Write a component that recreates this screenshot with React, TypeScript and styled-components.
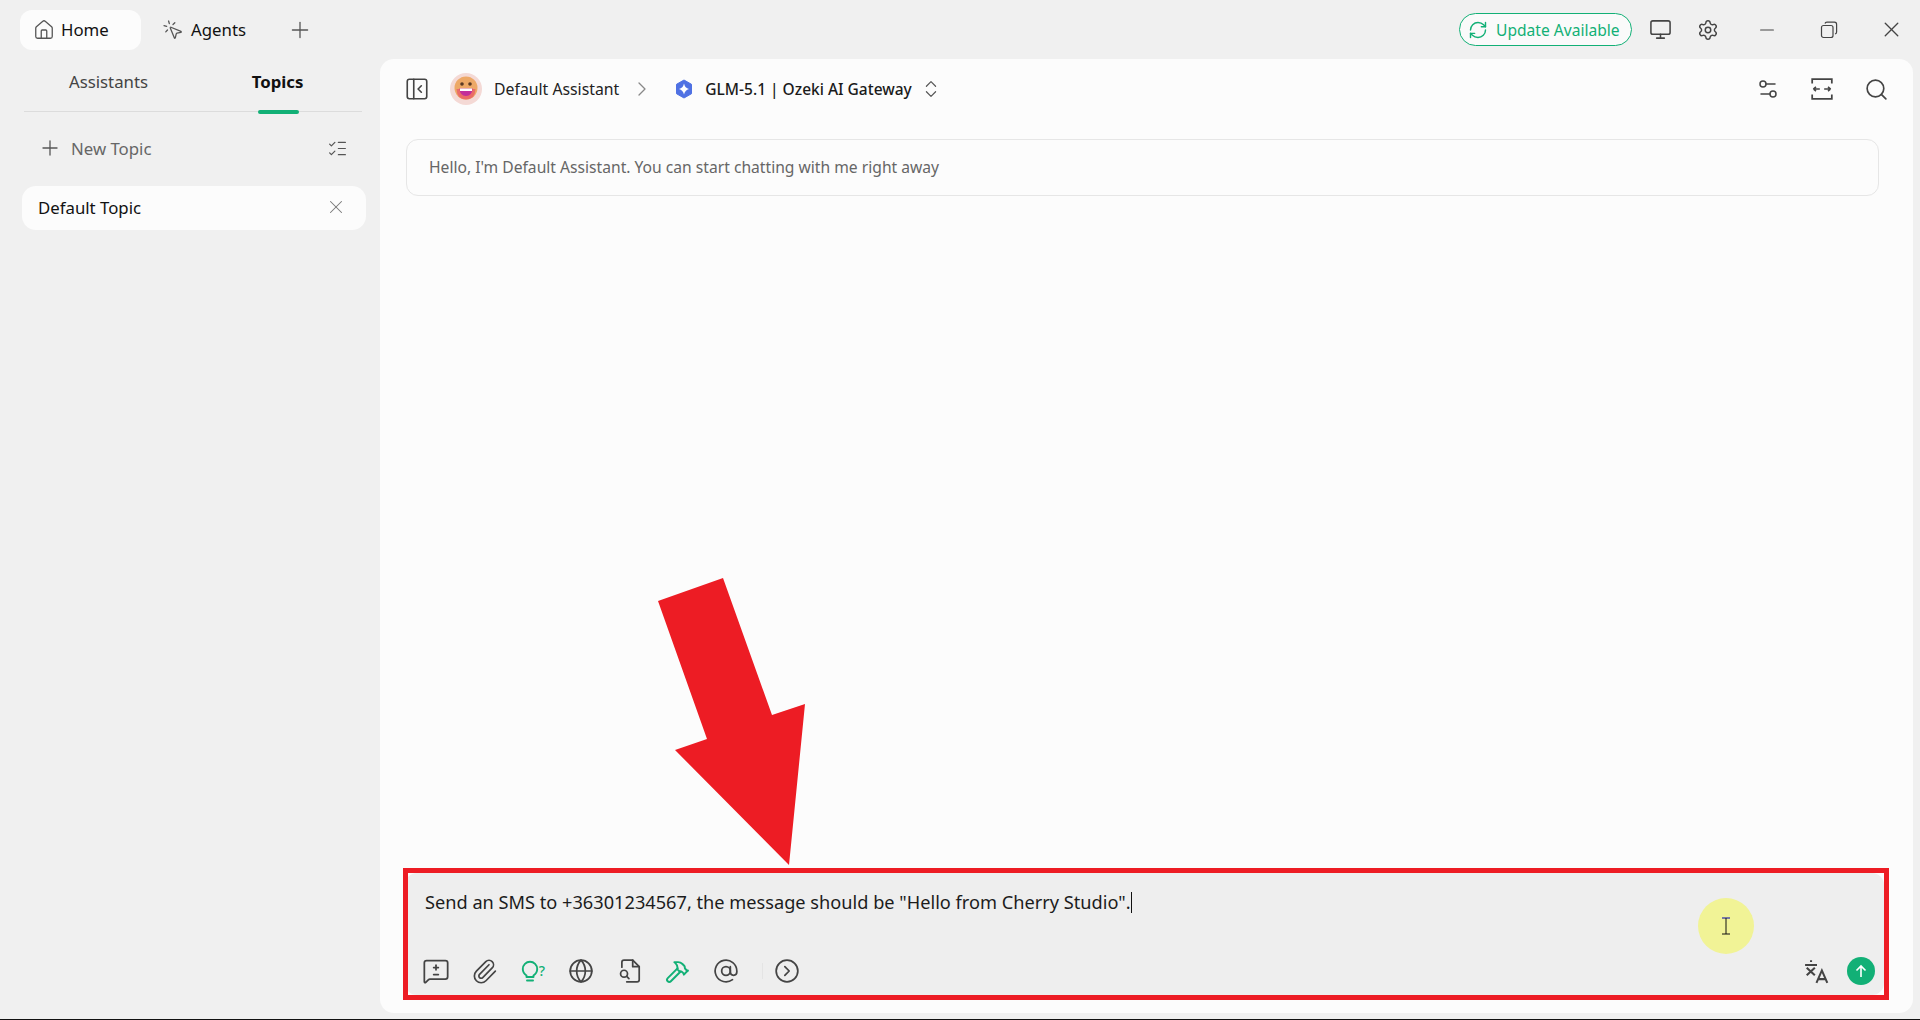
import React from "react";
import styled, { createGlobalStyle } from "styled-components";
import {
  AtSign,
  ChevronRight,
  ChevronsUpDown,
  CircleChevronRight,
  Globe,
  Hammer,
  House,
  ListChecks,
  MessageSquareDiff,
  Minus,
  Monitor,
  MousePointerClick,
  PanelLeftClose,
  Paperclip,
  Plus,
  RefreshCw,
  Search,
  Settings,
  Settings2,
  X,
} from "lucide-react";

const GREEN = "#12b076";
const RED = "#ed1c24";
const FONT = '"Noto Sans", "Open Sans", sans-serif';

const GlobalStyle = createGlobalStyle`
  html, body {
    margin: 0;
    padding: 0;
    background: #f0f0f0;
    font-family: ${FONT};
    overflow: hidden;
  }
  * { box-sizing: border-box; }
`;

const Window = styled.div`
  position: relative;
  width: 1920px;
  height: 1020px;
  display: flex;
  flex-direction: column;
  background: #f0f0f0;
  border-bottom: 1px solid #111;
  overflow: hidden;
`;

const TitleBar = styled.header`
  height: 59px;
  flex: none;
  display: flex;
  align-items: center;
  padding: 0 0 0 20px;
`;

const NavTab = styled.div<{ active?: boolean }>`
  height: 40px;
  display: flex;
  align-items: center;
  gap: ${(p) => (p.active ? "6px" : "7px")};
  padding: 0 ${(p) => (p.active ? "13px" : "15px")};
  width: ${(p) => (p.active ? "121px" : "auto")};
  border-radius: 12px;
  font-size: 16.8px;
  color: #111;
  background: ${(p) => (p.active ? "#fcfcfc" : "transparent")};
  margin: ${(p) => (p.active ? "0" : "0 26px 0 6px")};
  svg {
    color: #555;
  }
`;

const AddTab = styled.div`
  display: flex;
  color: #555;
`;

const TitleRight = styled.div`
  margin-left: auto;
  display: flex;
  align-items: center;
`;

const UpdatePill = styled.div`
  width: 173px;
  height: 33px;
  border: 1px solid ${GREEN};
  border-radius: 17px;
  background: #fafafa;
  color: ${GREEN};
  font-size: 15.6px;
  display: flex;
  align-items: center;
  gap: 8px;
  padding-left: 8px;
  white-space: nowrap;
  margin-right: 10px;
`;

const TitleIcon = styled.div<{ w: number }>`
  width: ${(p) => p.w}px;
  display: flex;
  justify-content: center;
  color: #444;
`;

const Body = styled.div`
  flex: 1;
  min-height: 0;
  display: flex;
  padding-bottom: 6px;
`;

const Sidebar = styled.aside`
  width: 380px;
  flex: none;
  padding: 0 18px 0 24px;
`;

const SideTabs = styled.div`
  display: flex;
  height: 53px;
  border-bottom: 1px solid #dcdcdc;
`;

const SideTab = styled.div<{ active?: boolean }>`
  position: relative;
  flex: 1;
  display: flex;
  align-items: center;
  justify-content: center;
  padding-bottom: 7px;
  font-size: 16.8px;
  font-weight: ${(p) => (p.active ? 700 : 400)};
  color: ${(p) => (p.active ? "#111" : "#444")};
  &::after {
    content: "";
    display: ${(p) => (p.active ? "block" : "none")};
    position: absolute;
    left: 50%;
    bottom: -3px;
    width: 41px;
    height: 4px;
    margin-left: -20px;
    border-radius: 2px;
    background: ${GREEN};
  }
`;

const NewTopicRow = styled.div`
  height: 74px;
  display: flex;
  align-items: center;
  padding: 0 14px 2px 14px;
  font-size: 16.8px;
  color: #666;
  gap: 9px;
  svg {
    color: #555;
  }
  svg:last-child {
    margin-left: auto;
  }
`;

const TopicCard = styled.div`
  height: 44px;
  margin: 0 -4px 0 -2px;
  display: flex;
  align-items: center;
  justify-content: space-between;
  padding: 0 19px 2px 16px;
  border-radius: 14px;
  background: #fcfcfc;
  font-size: 16.8px;
  color: #111;
  svg {
    color: #777;
  }
`;

const Main = styled.main`
  flex: 1;
  min-width: 0;
  margin-right: 7px;
  display: flex;
  flex-direction: column;
  background: #fcfcfc;
  border-radius: 14px;
  padding: 0 10px 0 24px;
`;

const ChatHeader = styled.div`
  height: 60px;
  flex: none;
  display: flex;
  align-items: center;
`;

const IconSlot = styled.div<{ color?: string; after?: number }>`
  display: flex;
  color: ${(p) => p.color ?? "#444"};
  margin-right: ${(p) => p.after ?? 0}px;
`;

const AvatarSlot = styled.div`
  display: flex;
`;

const AssistantName = styled.span`
  font-size: 15.8px;
  color: #222;
  margin: 0 11px 0 12px;
`;

const ModelName = styled.span`
  font-size: 15.5px;
  font-weight: 500;
  color: #1a1a1a;
  margin: 0 8px 0 12px;
`;

const HeaderRight = styled.div`
  margin-left: auto;
  display: flex;
  align-items: center;
  gap: 30px;
  padding-right: 14px;
  color: #444;
`;

const Greeting = styled.div`
  height: 57px;
  margin: 20px 24px 0 2px;
  border: 1px solid #e6e6e6;
  border-radius: 12px;
  display: flex;
  align-items: center;
  padding: 0 0 1px 22px;
  font-size: 15.65px;
  color: #666;
`;

const Spacer = styled.div`
  flex: 1;
`;

const Composer = styled.div`
  height: 122px;
  margin: 0 19px 18px 1px;
  background: #eeeeee;
  border-radius: 12px;
  display: flex;
  flex-direction: column;
  padding: 16px 9px 10px 17px;
`;

const ComposerText = styled.div`
  margin-left: 3px;
  font-size: 18.2px;
  line-height: 26px;
  color: #1c1c1c;
  white-space: nowrap;
`;

const Caret = styled.span`
  display: inline-block;
  width: 1px;
  height: 21px;
  background: #111;
  vertical-align: -4px;
`;

const ComposerTools = styled.div`
  margin-top: auto;
  display: flex;
  align-items: center;
  color: #444;
  svg {
    display: block;
  }
`;

const ToolButton = styled.div<{ green?: boolean }>`
  width: 28px;
  display: flex;
  justify-content: center;
  color: ${(p) => (p.green ? GREEN : "#444")};
  margin-right: 20.4px;
`;

const Hint = styled.span`
  font-size: 14px;
  font-weight: 500;
  color: ${GREEN};
  margin-top: 1px;
`;

const ToolDivider = styled.div`
  width: 1px;
  height: 16px;
  background: #e4e4e4;
  margin: 0 10px 0 1px;
`;

const ToolsEnd = styled.div`
  margin-left: auto;
  display: flex;
  align-items: center;
  gap: 17px;
`;

const SendButton = styled.div`
  width: 28px;
  height: 28px;
  border-radius: 50%;
  background: ${GREEN};
  color: #fff;
  display: flex;
  align-items: center;
  justify-content: center;
`;

/* annotation layer drawn over the screenshot */
const Highlight = styled.div`
  position: absolute;
  left: 403px;
  top: 868px;
  width: 1486px;
  height: 132px;
  border: 5px solid ${RED};
`;

const Arrow = styled.svg`
  position: absolute;
  left: 0;
  top: 0;
`;

const Cursor = styled.div`
  position: absolute;
  left: 1698px;
  top: 898px;
  width: 56px;
  height: 56px;
  border-radius: 50%;
  background: #f1f396;
  display: flex;
  align-items: center;
  justify-content: center;
`;

const Avatar = () => (
  <svg width="32" height="32" viewBox="0 0 32 32">
    <circle cx="16" cy="16" r="16" fill="#f4d9d5" />
    <circle cx="16" cy="15" r="11.5" fill="#eda866" />
    <path d="M6.5 16 H25.5 Q25 26.5 16 26.5 Q7 26.5 6.5 16 Z" fill="#ea6c68" />
    <path d="M9.5 15.5 H22.5 Q22 23 16 23 Q10 23 9.5 15.5 Z" fill="#c22f9a" />
    <rect x="10" y="15.5" width="12" height="2.5" fill="#fff" />
    <circle cx="12" cy="11" r="1.8" fill="#5b3a24" />
    <circle cx="20" cy="11" r="1.8" fill="#5b3a24" />
  </svg>
);

const ModelLogo = () => (
  <svg width="18" height="20" viewBox="0 0 18 20">
    <path d="M9 1 L16.5 5.3 V14.7 L9 19 L1.5 14.7 V5.3 Z" fill="#4f71e3" stroke="#4f71e3" strokeLinejoin="round" />
    <path d="M9 4.5 Q10 9 14 10 Q10 11 9 15.5 Q8 11 4 10 Q8 9 9 4.5 Z" fill="#fff" />
  </svg>
);

const RestoreIcon = () => (
  <svg width="18" height="18" viewBox="0 0 18 18" fill="none" stroke="currentColor" strokeWidth="1.2">
    <rect x="1.5" y="4.5" width="11.5" height="12" rx="2" />
    <path d="M5 2.5 Q5.3 1.2 7 1.2 H14.5 Q16.6 1.2 16.6 3.4 V11 Q16.6 12.6 15 13" />
  </svg>
);

const NarrowIcon = () => (
  <svg width="24" height="24" viewBox="0 0 22 22" fill="none" stroke="currentColor" strokeWidth="1.6">
    <path d="M2 6 V2 H20 V6 M2 16 V20 H20 V16" />
    <path d="M3 11 H9 M3 11 L5.5 9 M3 11 L5.5 13 M13 11 H19 M19 11 L16.5 9 M19 11 L16.5 13" strokeWidth="1.4" />
  </svg>
);

const BulbIcon = () => (
  <svg width="18" height="22" viewBox="0 0 18 22" fill="none" stroke="currentColor" strokeWidth="1.9">
    <path d="M5.5 15.5 C3.2 14 1.8 11.8 1.8 9 A7.2 7.2 0 0 1 16.2 9 C16.2 11.8 14.8 14 12.5 15.5 V17 H5.5 Z" strokeLinejoin="round" />
    <path d="M6 20.5 H12" strokeLinecap="round" />
  </svg>
);

const FileLensIcon = () => (
  <svg width="26" height="26" viewBox="0 0 24 24" fill="none" stroke="currentColor" strokeWidth="1.6" strokeLinecap="round" strokeLinejoin="round">
    <path d="M4.5 8.5 V4 A2 2 0 0 1 6.5 2 H14.5 L20.5 8 V20 A2 2 0 0 1 18.5 22 H9" />
    <path d="M14.5 2 V8 H20.5" />
    <circle cx="6.5" cy="14.5" r="3.2" />
    <path d="M9 17 L11 19" />
  </svg>
);

const TranslateIcon = () => (
  <svg width="26" height="26" viewBox="0 0 24 24" fill="none" stroke="#444" strokeWidth="1.9">
    <path d="M1 6.5 H12 M6.5 2 V3.8" />
    <path d="M2.5 9 L10 16 M10 9 L2.5 16" />
    <path d="M11.5 23 L16.5 11.5 L21.5 23 M13 19.5 H20" />
  </svg>
);

const IBeam = () => (
  <svg width="8" height="18" viewBox="0 0 8 18" fill="none" strokeWidth="1">
    <path d="M0 1 H8" stroke="#0000b0" />
    <path d="M4 1 V17 M0 17 H8" stroke="#111" />
  </svg>
);

const App = () => (
  <>
    <GlobalStyle />
    <Window>
      <TitleBar>
        <NavTab active>
          <House size={22} strokeWidth={1.4} />
          Home
        </NavTab>
        <NavTab>
          <MousePointerClick size={22} strokeWidth={1.4} />
          Agents
        </NavTab>
        <AddTab>
          <Plus size={26} strokeWidth={1.2} />
        </AddTab>
        <TitleRight>
          <UpdatePill>
            <RefreshCw size={20} strokeWidth={1.7} />
            Update Available
          </UpdatePill>
          <TitleIcon w={36}>
            <Monitor size={23} strokeWidth={1.6} />
          </TitleIcon>
          <TitleIcon w={60}>
            <Settings size={22} strokeWidth={1.6} />
          </TitleIcon>
          <TitleIcon w={58}>
            <Minus size={22} strokeWidth={1.2} />
          </TitleIcon>
          <TitleIcon w={66}>
            <RestoreIcon />
          </TitleIcon>
          <TitleIcon w={58}>
            <X size={25} strokeWidth={1.3} />
          </TitleIcon>
        </TitleRight>
      </TitleBar>
      <Body>
        <Sidebar>
          <SideTabs>
            <SideTab>Assistants</SideTab>
            <SideTab active>Topics</SideTab>
          </SideTabs>
          <NewTopicRow>
            <Plus size={24} strokeWidth={1.3} />
            New Topic
            <ListChecks size={21} strokeWidth={1.4} />
          </NewTopicRow>
          <TopicCard>
            Default Topic
            <X size={22} strokeWidth={1.1} />
          </TopicCard>
        </Sidebar>
        <Main>
          <ChatHeader>
            <IconSlot after={20}>
              <PanelLeftClose size={26} strokeWidth={1.5} />
            </IconSlot>
            <AvatarSlot>
              <Avatar />
            </AvatarSlot>
            <AssistantName>Default Assistant</AssistantName>
            <IconSlot color="#888" after={21}>
              <ChevronRight size={24} strokeWidth={1.3} />
            </IconSlot>
            <ModelLogo />
            <ModelName>GLM-5.1 | Ozeki AI Gateway</ModelName>
            <IconSlot color="#555">
              <ChevronsUpDown size={22} strokeWidth={1.3} />
            </IconSlot>
            <HeaderRight>
              <Settings2 size={24} strokeWidth={1.5} />
              <NarrowIcon />
              <Search size={25} strokeWidth={1.6} />
            </HeaderRight>
          </ChatHeader>
          <Greeting>Hello, I'm Default Assistant. You can start chatting with me right away</Greeting>
          <Spacer />
          <Composer>
            <ComposerText>
              Send an SMS to +36301234567, the message should be "Hello from Cherry Studio".
              <Caret />
            </ComposerText>
            <ComposerTools>
              <ToolButton>
                <MessageSquareDiff size={28} strokeWidth={1.5} />
              </ToolButton>
              <ToolButton>
                <Paperclip size={27} strokeWidth={1.5} />
              </ToolButton>
              <ToolButton green>
                <BulbIcon />
                <Hint>?</Hint>
              </ToolButton>
              <ToolButton>
                <Globe size={26} strokeWidth={1.6} />
              </ToolButton>
              <ToolButton>
                <FileLensIcon />
              </ToolButton>
              <ToolButton green>
                <Hammer size={25} strokeWidth={1.9} />
              </ToolButton>
              <ToolButton>
                <AtSign size={26} strokeWidth={1.6} />
              </ToolButton>
              <ToolDivider />
              <ToolButton>
                <CircleChevronRight size={26} strokeWidth={1.6} />
              </ToolButton>
              <ToolsEnd>
                <TranslateIcon />
                <SendButton>
                  <svg width="16" height="16" viewBox="0 0 16 16" fill="none" stroke="#fff" strokeWidth="1.6">
                    <path d="M8 14 V3 M3.5 7.5 L8 3 L12.5 7.5" />
                  </svg>
                </SendButton>
              </ToolsEnd>
            </ComposerTools>
          </Composer>
        </Main>
      </Body>
      <Highlight />
      <Arrow width="1920" height="1020" viewBox="0 0 1920 1020">
        <polygon points="658,601 723,578 772,715 805,704 789,865 675,750 707,739" fill={RED} />
      </Arrow>
      <Cursor>
        <IBeam />
      </Cursor>
    </Window>
  </>
);

export default App;
